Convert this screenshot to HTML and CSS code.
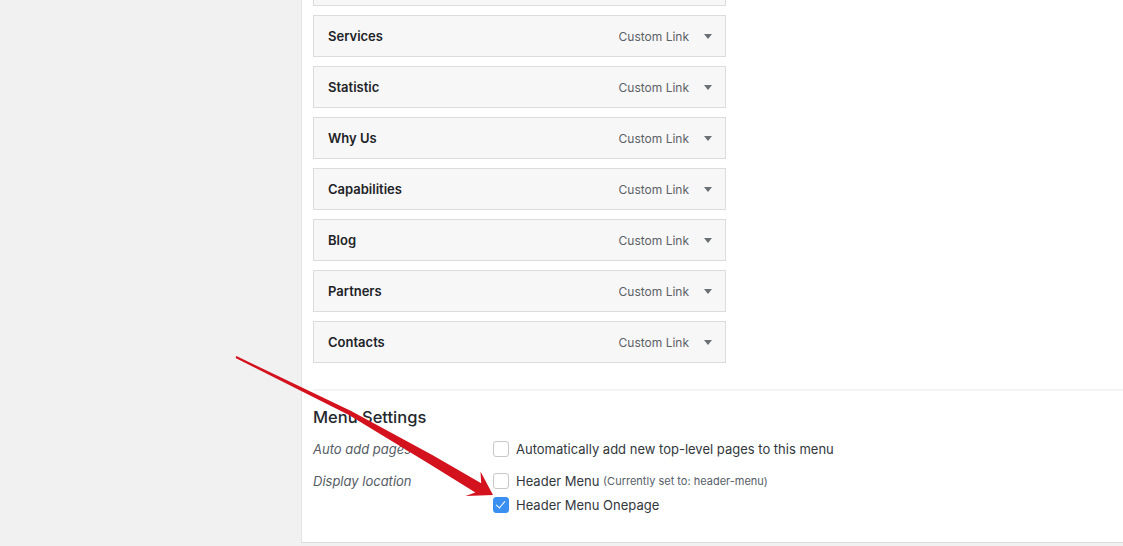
FILE: index.html
```html
<!DOCTYPE html>
<html lang="en">
<head>
    <meta charset="UTF-8">
    <title>Menus</title>
    <link rel="stylesheet" href="styles.css">
</head>
<body>
    <div class="layout">
        <div class="sidebar"></div>

        <div class="panel">
            <!-- menu items (first one scrolled out of view) -->
            <ul class="menu-list">
                <li class="menu-item stub"></li>
                <li class="menu-item"><span class="item-title">Services</span><span class="item-type">Custom Link</span><span class="item-arrow"></span></li>
                <li class="menu-item"><span class="item-title">Statistic</span><span class="item-type">Custom Link</span><span class="item-arrow"></span></li>
                <li class="menu-item"><span class="item-title">Why Us</span><span class="item-type">Custom Link</span><span class="item-arrow"></span></li>
                <li class="menu-item"><span class="item-title">Capabilities</span><span class="item-type">Custom Link</span><span class="item-arrow"></span></li>
                <li class="menu-item"><span class="item-title">Blog</span><span class="item-type">Custom Link</span><span class="item-arrow"></span></li>
                <li class="menu-item"><span class="item-title">Partners</span><span class="item-type">Custom Link</span><span class="item-arrow"></span></li>
                <li class="menu-item"><span class="item-title">Contacts</span><span class="item-type">Custom Link</span><span class="item-arrow"></span></li>
            </ul>

            <!-- menu settings -->
            <div class="menu-settings">
                <h3>Menu Settings</h3>
                <div class="setting-row">
                    <div class="setting-label">Auto add pages</div>
                    <div class="setting-options">
                        <label class="option"><span class="check"></span>Automatically add new top-level pages to this menu</label>
                    </div>
                </div>
                <div class="setting-row">
                    <div class="setting-label">Display location</div>
                    <div class="setting-options">
                        <label class="option"><span class="check"></span>Header Menu <small>(Currently set to: header-menu)</small></label>
                        <label class="option"><span class="check checked"></span>Header Menu Onepage</label>
                    </div>
                </div>
            </div>
        </div>
    </div>

    <!-- red arrow annotation -->
    <svg class="annotation" width="1123" height="546" viewBox="0 0 1123 546">
        <polygon points="236.4,356.1 351.1,410.9 432.3,455.1 481.2,483.2 480.5,471.5 493,495 465.4,496 475.4,492.5 427.8,462.9 348.9,415.1 235.6,357.9" fill="#d3121e"/>
    </svg>
</body>
</html>
```

FILE: styles.css
```css
html, body {
    margin: 0;
    padding: 0;
    height: 100%;
    overflow: hidden;
}

body {
    background-color: #f1f1f1;
    font-family: "Inter", "Liberation Sans", sans-serif;
    color: #23282d;
    position: relative;
}

.layout {
    display: flex;
    align-items: flex-start;
}

.sidebar {
    width: 301px;
    flex-shrink: 0;
}

.panel {
    flex: 1;
    height: 543px;
    background-color: #ffffff;
    border-left: 1px solid #e3e3e3;
    border-bottom: 1px solid #dddddd;
    padding-left: 11px;
    box-sizing: border-box;
}

.menu-list {
    list-style: none;
    margin: 0;
    padding: 0;
    width: 413px;
}

.menu-item {
    display: flex;
    align-items: center;
    height: 42px;
    box-sizing: border-box;
    margin-bottom: 9px;
    padding: 0 13px 0 14px;
    background-color: #f7f7f7;
    border: 1px solid #dcdcdc;
}

/* the item above, only its bottom edge shows */
.menu-item.stub {
    height: 6px;
    border-top: none;
}

.item-title {
    flex: 1;
    font-size: 13px;
    font-weight: 600;
    color: #1d2327;
}

.item-type {
    font-size: 12px;
    color: #5c6166;
    margin-right: 15px;
}

.item-arrow {
    width: 0;
    height: 0;
    border-left: 4px solid transparent;
    border-right: 4px solid transparent;
    border-top: 5px solid #6b7075;
}

.menu-settings {
    margin-top: 26px;
    border-top: 2px solid #f3f3f3;
    padding-top: 16px;
}

.menu-settings h3 {
    margin: 0 0 12px;
    font-size: 16.5px;
    font-weight: 500;
    color: #23282d;
}

.setting-row {
    display: flex;
    margin-bottom: 12px;
}

.setting-label {
    width: 180px;
    font-size: 13px;
    font-style: italic;
    color: #555d66;
    line-height: 20px;
}

.setting-options {
    display: flex;
    flex-direction: column;
    gap: 4px;
}

.option {
    display: flex;
    align-items: center;
    font-size: 13px;
    color: #32373c;
    line-height: 20px;
    white-space: pre;
}

.option small {
    font-size: 11px;
    color: #555d66;
}

.check {
    width: 14px;
    height: 14px;
    border: 1px solid #c8c8c8;
    border-radius: 3px;
    background-color: #ffffff;
    margin-right: 7px;
    position: relative;
}

.check.checked {
    background-color: #3b8ff0;
    border-color: #3b8ff0;
}

.check.checked::after {
    content: "";
    position: absolute;
    left: 4px;
    top: 1px;
    width: 4px;
    height: 8px;
    border-right: 1.5px solid #ffffff;
    border-bottom: 1.5px solid #ffffff;
    transform: rotate(40deg);
}

.annotation {
    position: absolute;
    top: 0;
    left: 0;
    pointer-events: none;
}
```
